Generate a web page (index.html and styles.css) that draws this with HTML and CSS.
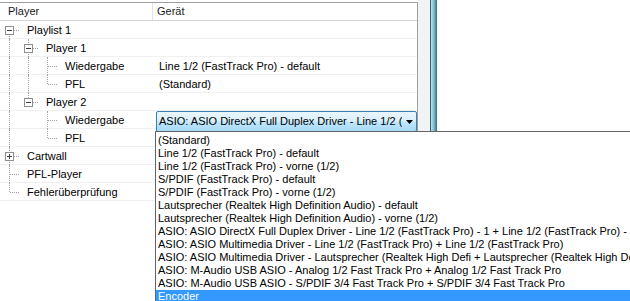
FILE: index.html
```html
<!DOCTYPE html>
<html lang="de">

<head>
    <meta charset="UTF-8">
    <meta name="viewport" content="width=device-width, initial-scale=1.0">
    <title>Player</title>
    <link rel="stylesheet" href="styles.css">
</head>

<body>
    <div class="screen">
        <div class="tree">
            <div class="head">
                <div class="hcol1">Player</div>
                <div class="hcol2">Gerät</div>
            </div>
            <!-- Playlist 1 -->
            <div class="row">
                <div class="c1">
                    <span class="g first"><svg class="box" width="9" height="9"><rect x="0.5" y="0.5" width="8" height="8" fill="#fff" stroke="#8e8f8f"/><path d="M2 4.5h5" stroke="#3d3d3d"/></svg></span>
                    <span class="t">Playlist 1</span>
                </div>
                <div class="c2"></div>
            </div>
            <div class="row">
                <div class="c1">
                    <span class="g v"></span>
                    <span class="g tee"><svg class="box" width="9" height="9"><rect x="0.5" y="0.5" width="8" height="8" fill="#fff" stroke="#8e8f8f"/><path d="M2 4.5h5" stroke="#3d3d3d"/></svg></span>
                    <span class="t">Player 1</span>
                </div>
                <div class="c2"></div>
            </div>
            <div class="row">
                <div class="c1">
                    <span class="g v"></span>
                    <span class="g v"></span>
                    <span class="g tee"></span>
                    <span class="t">Wiedergabe</span>
                </div>
                <div class="c2">Line 1/2 (FastTrack Pro) - default</div>
            </div>
            <div class="row">
                <div class="c1">
                    <span class="g v"></span>
                    <span class="g v"></span>
                    <span class="g last"></span>
                    <span class="t">PFL</span>
                </div>
                <div class="c2">(Standard)</div>
            </div>
            <div class="row">
                <div class="c1">
                    <span class="g v"></span>
                    <span class="g last"><svg class="box" width="9" height="9"><rect x="0.5" y="0.5" width="8" height="8" fill="#fff" stroke="#8e8f8f"/><path d="M2 4.5h5" stroke="#3d3d3d"/></svg></span>
                    <span class="t">Player 2</span>
                </div>
                <div class="c2"></div>
            </div>
            <div class="row">
                <div class="c1">
                    <span class="g v"></span>
                    <span class="g"></span>
                    <span class="g tee"></span>
                    <span class="t">Wiedergabe</span>
                </div>
                <div class="c2 combo-cell">
                    <div class="combo">
                        <span class="combo-text">ASIO: ASIO DirectX Full Duplex Driver - Line 1/2 (FastTrack Pro) - 1 + Line 1/2 (FastTrack Pro) - 2</span>
                        <span class="combo-arrow"><svg width="7" height="4"><path d="M0 0h7L3.5 4z" fill="#000"/></svg></span>
                    </div>
                </div>
            </div>
            <div class="row">
                <div class="c1">
                    <span class="g v"></span>
                    <span class="g"></span>
                    <span class="g last"></span>
                    <span class="t">PFL</span>
                </div>
                <div class="c2"></div>
            </div>
            <!-- Cartwall -->
            <div class="row">
                <div class="c1">
                    <span class="g tee"><svg class="box" width="9" height="9"><rect x="0.5" y="0.5" width="8" height="8" fill="#fff" stroke="#8e8f8f"/><path d="M2 4.5h5M4.5 2v5" stroke="#3d3d3d"/></svg></span>
                    <span class="t">Cartwall</span>
                </div>
                <div class="c2"></div>
            </div>
            <div class="row">
                <div class="c1">
                    <span class="g tee"></span>
                    <span class="t">PFL-Player</span>
                </div>
                <div class="c2"></div>
            </div>
            <div class="row">
                <div class="c1">
                    <span class="g last"></span>
                    <span class="t">Fehlerüberprüfung</span>
                </div>
                <div class="c2"></div>
            </div>
        </div>
        <div class="gap"></div>
        <div class="frame"></div>
        <div class="rest"></div>

        <!-- offene Liste der Combobox -->
        <ul class="droplist">
            <li>(Standard)</li>
            <li>Line 1/2 (FastTrack Pro) - default</li>
            <li>Line 1/2 (FastTrack Pro) - vorne (1/2)</li>
            <li>S/PDIF (FastTrack Pro) - default</li>
            <li>S/PDIF (FastTrack Pro) - vorne (1/2)</li>
            <li>Lautsprecher (Realtek High Definition Audio) - default</li>
            <li>Lautsprecher (Realtek High Definition Audio) - vorne (1/2)</li>
            <li>ASIO: ASIO DirectX Full Duplex Driver - Line 1/2 (FastTrack Pro) - 1 + Line 1/2 (FastTrack Pro) - 2</li>
            <li>ASIO: ASIO Multimedia Driver - Line 1/2 (FastTrack Pro) + Line 1/2 (FastTrack Pro)</li>
            <li>ASIO: ASIO Multimedia Driver - Lautsprecher (Realtek High Defi + Lautsprecher (Realtek High Defi</li>
            <li>ASIO: M-Audio USB ASIO - Analog 1/2 Fast Track Pro + Analog 1/2 Fast Track Pro</li>
            <li>ASIO: M-Audio USB ASIO - S/PDIF 3/4 Fast Track Pro + S/PDIF 3/4 Fast Track Pro</li>
            <li class="sel">Encoder</li>
        </ul>
    </div>
</body>

</html>
```

FILE: styles.css
```css
* {
    box-sizing: border-box;
}

body {
    margin: 0;
    font-family: "Liberation Sans", Arial, sans-serif;
    font-size: 11px;
    color: #000;
    background: #fff;
}

.screen {
    position: relative;
    display: flex;
    width: 630px;
    height: 301px;
    overflow: hidden;
    background: #fff;
}

.tree {
    width: 418px;
    flex: none;
    margin-top: 2px;
    border-top: 1px solid #a0a0a0;
    border-right: 1px solid #a0a0a0;
}

.head {
    display: flex;
    height: 18px;
    line-height: 17px;
    border-bottom: 1px solid #d5d5d5;
    color: #1a1a1a;
}

.hcol1 {
    width: 153px;
    padding-left: 8px;
    border-right: 1px solid #e3e3e3;
}

.hcol2 {
    flex: 1;
    padding-left: 4px;
}

.row {
    display: flex;
    height: 18px;
    line-height: 18px;
    background: linear-gradient(to top, #f0f0f0 1px, transparent 1px);
}

.c1 {
    display: flex;
    width: 153px;
    flex: none;
}

.c2 {
    flex: 1;
    min-width: 0;
    padding-left: 6px;
    white-space: nowrap;
}

.t {
    margin-left: 8px;
    white-space: nowrap;
}

/* Baumlinien */
.g {
    position: relative;
    width: 19px;
    flex: none;
}

.g::before,
.g::after {
    content: "";
    position: absolute;
}

.v::before,
.tee::before,
.last::before,
.first::before {
    left: 9px;
    top: 0;
    bottom: 0;
    border-left: 1px dotted #a0a0a0;
}

.last::before {
    bottom: 9px;
}

.first::before {
    top: 9px;
}

.tee::after,
.last::after,
.first::after {
    left: 10px;
    right: 0;
    top: 9px;
    border-top: 1px dotted #a0a0a0;
}

.box {
    position: absolute;
    left: 5px;
    top: 5px;
    z-index: 1;
}

/* Combobox */
.combo-cell {
    padding-left: 3px;
}

.combo {
    display: flex;
    width: 100%;
    height: 21px;
    line-height: 19px;
    border: 1px solid #3c7fb1;
    border-radius: 2px;
    background: linear-gradient(#eaf6fd 0%, #d9f0fc 45%, #bee6fd 55%, #a7d9f5 100%);
}

.combo-text {
    flex: 1;
    min-width: 0;
    overflow: hidden;
    padding-left: 2px;
    white-space: nowrap;
}

.combo-arrow {
    display: flex;
    width: 14px;
    flex: none;
    align-items: center;
    justify-content: center;
}

.gap {
    width: 12px;
    flex: none;
    background: #f2f3f4;
}

.frame {
    width: 7px;
    flex: none;
    background: linear-gradient(to right, #35606e 0, #35606e 1px, #bfe3ea 1px, #92cad6 3px, #5fa5b8 5px, #2e6c80 7px);
}

.rest {
    flex: 1;
    background: #fff;
}

/* aufgeklappte Liste */
.droplist {
    position: absolute;
    left: 155px;
    top: 131px;
    width: 500px;
    height: 175px;
    margin: 0;
    padding: 2px 0 0;
    list-style: none;
    background: #fff;
    border-left: 1px solid #646464;
    border-top: 1px solid #646464;
}

.droplist li {
    height: 13px;
    line-height: 13px;
    padding-left: 2px;
    white-space: nowrap;
}

.droplist .sel {
    background: #3399ff;
    color: #fff;
}
```
